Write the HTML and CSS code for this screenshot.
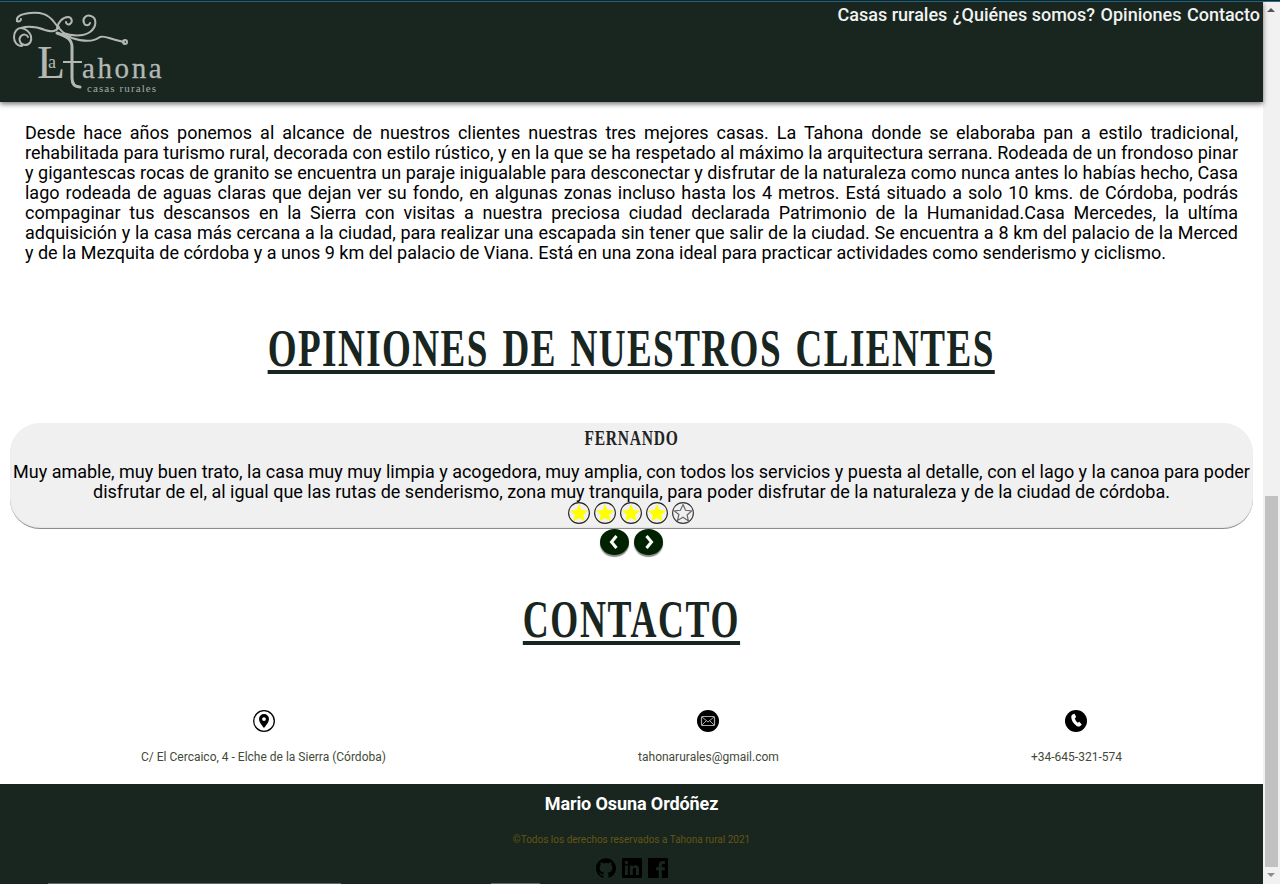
FILE: index.html
```html
<!DOCTYPE html>
<html lang="es">
<head>
<meta charset="utf-8">
<title>La Tahona</title>
<link rel="stylesheet" href="styles.css">
</head>
<body>
<div class="top-strip"></div>
<div class="window">
<div class="page">
  <header class="header">
    <svg class="logo" viewBox="10 2 156 100" width="156" height="100" aria-label="La Tahona casas rurales">
      <g fill="none" stroke="#b4b8b5" stroke-width="2" stroke-linecap="round">
        <path d="M17 21c-1-4 3-7 13-8 11-1 18 1 24 9 5 7 10 13 18 16 9 3 20 5 28-1 5-2 9 2 24 5"/>
        <path d="M17 21c2 1 4 0 4-2"/>
        <path d="M28 37c-1-3-5-3-7-1-3 3-1 9 4 9 5 0 7-4 6-9-1-3-5-8-10-8-4 0-7 4-7 9 0 5 3 9 8 9M21 28c7-2 16-1 24 2 6 2 11 2 14-3"/>
        <path d="M57 28c1-6 6-11 11-11 4 0 5 5 2 7-2 1-4 0-4-2"/>
        <path d="M63 33c8 3 20 4 27-1 7-5 7-14 1-16-5-2-9 3-7 7 1 3 5 3 6 0"/>
        <circle cx="125" cy="42" r="2"/>
      </g>
      <path d="M57 33c9 3 15 6 15 14v31c0 6 3 9 8 9" fill="none" stroke="#b4b8b5" stroke-width="3" stroke-linecap="round"/>
      <path d="M63 62h19" stroke="#b4b8b5" stroke-width="2"/>
      <text class="logo-l" x="37" y="78">L<tspan class="logo-a" dx="-17" dy="-10">a</tspan></text>
      <text class="logo-name" x="82" y="78">ahona</text>
      <text class="logo-sub" x="87" y="92">casas rurales</text>
    </svg>
    <nav class="nav">
      <a>Casas rurales</a>
      <a>¿Quiénes somos?</a>
      <a>Opiniones</a>
      <a>Contacto</a>
    </nav>
  </header>

  <p class="intro">Desde hace años ponemos al alcance de nuestros clientes nuestras tres mejores casas. La Tahona donde se elaboraba pan a estilo tradicional, rehabilitada para turismo rural, decorada con estilo rústico, y en la que se ha respetado al máximo la arquitectura serrana. Rodeada de un frondoso pinar y gigantescas rocas de granito se encuentra un paraje inigualable para desconectar y disfrutar de la naturaleza como nunca antes lo habías hecho, Casa lago rodeada de aguas claras que dejan ver su fondo, en algunas zonas incluso hasta los 4 metros. Está situado a solo 10 kms. de Córdoba, podrás compaginar tus descansos en la Sierra con visitas a nuestra preciosa ciudad declarada Patrimonio de la Humanidad.Casa Mercedes, la ultíma adquisición y la casa más cercana a la ciudad, para realizar una escapada sin tener que salir de la ciudad. Se encuentra a 8 km del palacio de la Merced y de la Mezquita de córdoba y a unos 9 km del palacio de Viana. Está en una zona ideal para practicar actividades como senderismo y ciclismo.</p>

  <h2 class="title title-opinions"><span>OPINIONES DE NUESTROS CLIENTES</span></h2>

  <section class="card">
    <h3 class="card-name"><span>FERNANDO</span></h3>
    <p class="card-text">Muy amable, muy buen trato, la casa muy muy limpia y acogedora, muy amplia, con todos los servicios y puesta al detalle, con el lago y la canoa para poder disfrutar de el, al igual que las rutas de senderismo, zona muy tranquila, para poder disfrutar de la naturaleza y de la ciudad de córdoba.</p>
    <div class="stars">
      <svg class="star" viewBox="0 0 22 22"><circle cx="11" cy="11" r="10.4" fill="#f0f0f0" stroke="#222" stroke-width="1.1"/><path d="M11 2.2l2.6 5.9 6.4.6-4.8 4.3 1.4 6.3L11 16l-5.6 3.3 1.4-6.3L2 8.7l6.4-.6z" fill="#ffff00"/></svg>
      <svg class="star" viewBox="0 0 22 22"><circle cx="11" cy="11" r="10.4" fill="#f0f0f0" stroke="#222" stroke-width="1.1"/><path d="M11 2.2l2.6 5.9 6.4.6-4.8 4.3 1.4 6.3L11 16l-5.6 3.3 1.4-6.3L2 8.7l6.4-.6z" fill="#ffff00"/></svg>
      <svg class="star" viewBox="0 0 22 22"><circle cx="11" cy="11" r="10.4" fill="#f0f0f0" stroke="#222" stroke-width="1.1"/><path d="M11 2.2l2.6 5.9 6.4.6-4.8 4.3 1.4 6.3L11 16l-5.6 3.3 1.4-6.3L2 8.7l6.4-.6z" fill="#ffff00"/></svg>
      <svg class="star" viewBox="0 0 22 22"><circle cx="11" cy="11" r="10.4" fill="#f0f0f0" stroke="#222" stroke-width="1.1"/><path d="M11 2.2l2.6 5.9 6.4.6-4.8 4.3 1.4 6.3L11 16l-5.6 3.3 1.4-6.3L2 8.7l6.4-.6z" fill="#ffff00"/></svg>
      <svg class="star" viewBox="0 0 22 22"><circle cx="11" cy="11" r="10.4" fill="#f0f0f0" stroke="#333" stroke-width="1.1"/><path d="M11 2.6l2.6 5.7 6 .6-4.5 4.1 1.3 5.9L11 15.3l-5.4 3.1 1.3-5.9L2.4 8.9l6-.6z" fill="#f0f0f0" stroke="#666" stroke-width="1.2"/></svg>
    </div>
  </section>
  <div class="arrows">
    <button class="arrow"><svg viewBox="0 0 29 26" width="29" height="26"><path d="M16.5 7l-5 6 5 6" fill="none" stroke="#fff" stroke-width="3"/></svg></button>
    <button class="arrow"><svg viewBox="0 0 29 26" width="29" height="26"><path d="M12.5 7l5 6-5 6" fill="none" stroke="#fff" stroke-width="3"/></svg></button>
  </div>

  <h2 class="title title-contact"><span>CONTACTO</span></h2>

  <section class="contact">
    <div class="contact-item">
      <svg class="contact-icon" viewBox="0 0 22 22"><circle cx="11" cy="11" r="10.3" fill="#fff" stroke="#000" stroke-width="1.3"/><path fill-rule="evenodd" d="M11 4a5 5 0 0 0-5 5c0 3.6 5 9 5 9s5-5.4 5-9a5 5 0 0 0-5-5zm0 3.2a1.9 1.9 0 1 1 0 3.800 1.9 1.9 0 0 1 0-3.800z" fill="#000"/></svg>
      <span>C/ El Cercaico, 4 - Elche de la Sierra (Córdoba)</span>
    </div>
    <div class="contact-item">
      <svg class="contact-icon" viewBox="0 0 22 22"><circle cx="11" cy="11" r="11" fill="#000"/><rect x="4.5" y="6.5" width="13" height="9" rx="1" fill="none" stroke="#aaa" stroke-width="1.2"/><path d="M5 7l6 5 6-5M5 15l4.500-4.500M17 15l-4.500-4.500" fill="none" stroke="#aaa" stroke-width="1"/></svg>
      <span>tahonarurales@gmail.com</span>
    </div>
    <div class="contact-item">
      <svg class="contact-icon" viewBox="0 0 22 22"><circle cx="11" cy="11" r="11" fill="#000"/><path d="M7.500 4.500l2-.7 1.700 3.300-1.300 1.200c.3 1.600 1.300 3.300 2.800 4.400l1.600-.9 2.500 2.600-1.500 1.700c-1 .8-2.500.6-3.700-.2-3-2-5-5-5.300-8.300-.1-1.300.2-2.400 1.200-3.100z" fill="#fff"/></svg>
      <span>+34-645-321-574</span>
    </div>
  </section>

  <footer class="footer">
    <p class="footer-name">Mario Osuna Ordóñez</p>
    <p class="footer-copy">©Todos los derechos reservados a Tahona rural 2021</p>
    <div class="social">
      <svg viewBox="0 0 24 24" width="20" height="20"><path d="M12 .297c-6.630 0-12 5.373-12 12 0 5.303 3.438 9.800 8.205 11.385.6.113.82-.258.82-.577 0-.285-.01-1.040-.015-2.040-3.338.724-4.042-1.610-4.042-1.610C4.422 18.070 3.633 17.700 3.633 17.700c-1.087-.744.084-.729.084-.729 1.205.084 1.838 1.236 1.838 1.236 1.070 1.835 2.809 1.305 3.495.998.108-.776.417-1.305.76-1.605-2.665-.3-5.466-1.332-5.466-5.930 0-1.310.465-2.380 1.235-3.220-.135-.303-.54-1.523.105-3.176 0 0 1.005-.322 3.300 1.230.96-.267 1.980-.399 3-.405 1.020.006 2.040.138 3 .405 2.280-1.552 3.285-1.230 3.285-1.230.645 1.653.24 2.873.12 3.176.765.84 1.230 1.910 1.230 3.220 0 4.610-2.805 5.625-5.475 5.920.42.36.81 1.096.81 2.220 0 1.606-.015 2.896-.015 3.286 0 .315.21.69.825.57C20.565 22.092 24 17.592 24 12.297c0-6.627-5.373-12-12-12"/></svg>
      <svg viewBox="0 0 24 24" width="20" height="20"><path d="M20.447 20.452h-3.554v-5.569c0-1.328-.027-3.037-1.852-3.037-1.853 0-2.136 1.445-2.136 2.939v5.667H9.351V9h3.414v1.561h.046c.477-.9 1.637-1.850 3.370-1.850 3.601 0 4.267 2.370 4.267 5.455v6.286zM5.337 7.433c-1.144 0-2.063-.926-2.063-2.065 0-1.138.92-2.063 2.063-2.063 1.140 0 2.064.925 2.064 2.063 0 1.139-.925 2.065-2.064 2.065zm1.782 13.019H3.555V9h3.564v11.452zM22.225 0H1.771C.792 0 0 .774 0 1.729v20.542C0 23.227.792 24 1.771 24h20.451C23.200 24 24 23.227 24 22.271V1.729C24 .774 23.200 0 22.222 0h.003z"/></svg>
      <svg viewBox="0 0 24 24" width="20" height="20"><path d="M22.675 0H1.325C.593 0 0 .593 0 1.325v21.351C0 23.407.593 24 1.325 24H12.820v-9.294H9.692v-3.622h3.128V8.413c0-3.100 1.893-4.788 4.659-4.788 1.325 0 2.463.04 2.795.194v3.240l-1.918.001c-1.504 0-1.795.715-1.795 1.763v2.313h3.587l-.001 3.622h-3.587V24h6.116c.73 0 1.325-.593 1.325-1.325V1.325C24 .593 23.407 0 22.675 0z"/></svg>
    </div>
  </footer>
</div>
<aside class="scrollbar">
  <div class="scroll-up"></div>
  <div class="scroll-track"><div class="scroll-thumb"></div></div>
  <div class="scroll-down"></div>
</aside>
</div>
</body>
</html>
```
FILE: styles.css
```css
* { box-sizing: border-box; }
html, body { margin: 0; height: 884px; overflow: hidden; }
body { background: #fff; font-family: Roboto, "Liberation Sans", sans-serif; color: #000; }

.top-strip { height: 2px; background: linear-gradient(#18261f 50%, #1f6f96 50%); }
.window { display: flex; height: 882px; }
.page { width: 1263px; display: flex; flex-direction: column; }

.header { height: 100px; background: #18261f; box-shadow: 0 2px 5px rgba(0,0,0,.55); display: flex; justify-content: space-between; align-items: flex-start; padding-left: 10px; padding-right: 3px; position: relative; }
.logo { display: block; }
.logo-l { font: 400 46px "Liberation Serif", serif; fill: #b4b8b5; }
.logo-a { font-size: 18px; }
.logo-name { font: 400 29px "Liberation Serif", serif; fill: #b4b8b5; stroke: #b4b8b5; stroke-width: .3px; letter-spacing: 2.6px; }
.logo-sub { font: 400 11px "Liberation Serif", serif; fill: #a5aaa7; letter-spacing: 1.1px; }
.nav { display: flex; gap: 5.5px; font-size: 18px; font-weight: 500; line-height: 26px; color: #f2f2f2; }

.intro { margin: 21px 25px 0; font-size: 18px; line-height: 20px; text-align: justify; letter-spacing: -.012px; }

.title { margin: 0; text-align: center; font-family: "Liberation Serif", serif; font-weight: 700; color: #18261f; line-height: 1; }
.title span { display: inline-block; text-decoration: underline; text-decoration-thickness: 4px; text-underline-offset: 4px; letter-spacing: 2.4px; transform: scaleX(.69); }
.title-opinions { margin-top: 60px; font-size: 52px; white-space: nowrap; }
.title-opinions span { letter-spacing: 2px; word-spacing: 4px; transform: scaleX(.714); }
.title-contact { margin-top: 39px; font-size: 52px; }

.card { margin: 48px 10px 0; height: 106px; background: #f0f0f0; border-radius: 30px; border-bottom: 1px solid #8c8c8c; box-shadow: inset 0 -1px 2px rgba(0,0,0,.05); text-align: center; padding-top: 3px; }
.card-name { margin: 0; font: 700 21px/24px "Liberation Serif", serif; color: #222; }
.card-name span { display: inline-block; letter-spacing: 1px; transform: scaleX(.74); }
.card-text { margin: 12px 0 0; padding: 0 3px; font-size: 18px; line-height: 20px; }
.stars { display: flex; justify-content: center; gap: 4px; margin-top: 0; padding-right: 1px; }
.star { width: 22px; height: 22px; display: block; }

.arrows { display: flex; justify-content: center; gap: 5px; margin-top: 0; }
.arrow { width: 29px; height: 26px; padding: 0; border: 0; border-radius: 50%; background: #002200; box-shadow: 0 2px 1px #8a8a8a; display: block; }
.arrow svg { display: block; }

.contact { margin-top: 64px; padding: 0 15px; display: flex; justify-content: space-around; font-size: 12px; color: #3f4a38; }
.contact-item { display: flex; flex-direction: column; align-items: center; gap: 18px; line-height: 14px; }
.contact-icon { width: 22px; height: 22px; display: block; }

.footer { margin-top: 20px; flex: 1; background: #18261f linear-gradient(90deg, transparent 48px, #666 48px, #666 341px, transparent 341px, transparent 491px, #666 491px, #666 540px, transparent 540px) no-repeat bottom / 100% 1px; text-align: center; display: flex; flex-direction: column; align-items: center; }
.footer-name { margin: 9px 0 0; font-size: 18px; font-weight: 700; line-height: 22px; color: #fff; letter-spacing: -.1px; }
.footer-copy { margin: 19px 0 0; font-size: 10px; line-height: 12px; color: #665510; }
.social { display: flex; gap: 6px; margin-top: 12px; }
.social svg { display: block; fill: #000; }

.scrollbar { width: 17px; background: #f1f1f1; display: flex; flex-direction: column; }
.scroll-up, .scroll-down { height: 17px; position: relative; flex: none; }
.scroll-up::after, .scroll-down::after { content: ""; position: absolute; left: 4px; border-left: 4px solid transparent; border-right: 4px solid transparent; }
.scroll-up::after { top: 6px; border-bottom: 4px solid #555; }
.scroll-down::after { top: 6px; border-top: 4px solid #8c8c8c; }
.scroll-track { flex: 1; padding-top: 477px; }
.scroll-thumb { margin-left: 2px; width: 13px; height: 371px; background: #c1c1c1; }
```
